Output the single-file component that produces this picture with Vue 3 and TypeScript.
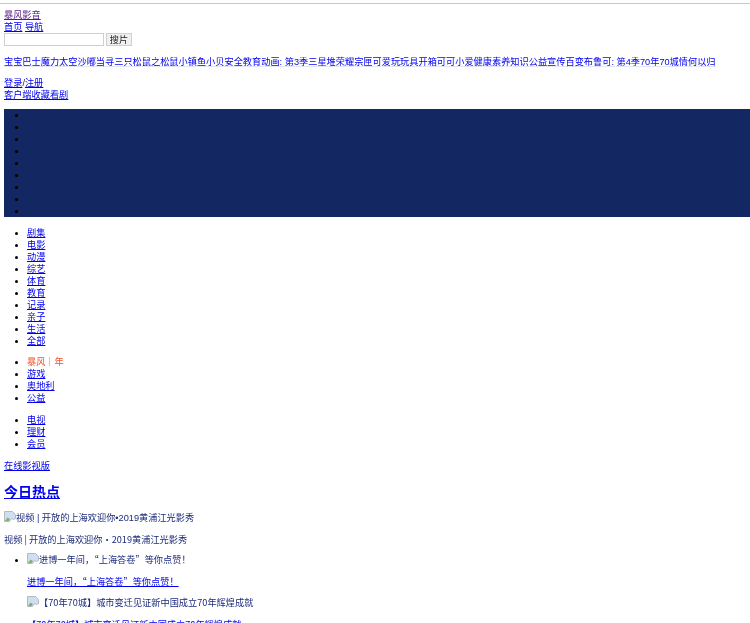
<script setup lang="ts">
const darkBullets = Array.from({ length: 9 }, (_, i) => i)
const channels = ['剧集', '电影', '动漫', '综艺', '体育', '教育', '记录', '亲子', '生活', '全部']
const others = ['暴风｜年', '游戏', '奥地利', '公益']
const services = ['电视', '理财', '会员']
const marquee = '宝宝巴士魔力太空沙嘟当寻三只松鼠之松鼠小镇鱼小贝安全教育动画: 第3季三星堆荣耀宗匣可爱玩玩具开箱可可小爱健康素养知识公益宣传百变布鲁可: 第4季70年70城情何以归'
</script>

<template>
  <div class="page">
    <div class="rule"></div>
    <div class="content">
      <div class="line"><a class="visited">暴风影音</a></div>
      <div class="line"><a>首页</a> <a>导航</a></div>
      <div class="search">
        <input class="field" type="text" />
        <button class="btn" type="button">搜片</button>
      </div>
      <div class="marquee"><a class="faint">{{ marquee }}</a></div>
      <div class="line login"><a>登录</a>/<a>注册</a></div>
      <div class="line"><a>客户端收藏看剧</a></div>
      <ul class="dark">
        <li v-for="i in darkBullets" :key="i"></li>
      </ul>
      <ul class="list">
        <li v-for="c in channels" :key="c"><a>{{ c }}</a></li>
      </ul>
      <ul class="list second">
        <li v-for="(c, i) in others" :key="c"><a :class="{ orange: i === 0 }">{{ c }}</a></li>
      </ul>
      <ul class="list">
        <li v-for="c in services" :key="c"><a>{{ c }}</a></li>
      </ul>
      <div class="line copyright"><a>在线影视版</a></div>
      <h2 class="heading"><a>今日热点</a></h2>
      <div class="thumb first">
        <svg class="broken" viewBox="0 0 12 11"><path d="M.5 10.5V.5h8l3 3v4l-2 1-2-1-2 3z" fill="#cfdff3" stroke="#b8b8b8"/><path d="M1 10l2.5-3.5L6 8l-1.5 2z" fill="#7fae70"/></svg><span>视频 | 开放的上海欢迎你•2019黄浦江光影秀</span>
      </div>
      <div class="caption"><span>视频 | 开放的上海欢迎你•2019黄浦江光影秀</span></div>
      <ul class="news">
        <li>
          <div class="thumb lead">
            <svg class="broken" viewBox="0 0 12 11"><path d="M.5 10.5V.5h8l3 3v4l-2 1-2-1-2 3z" fill="#cfdff3" stroke="#b8b8b8"/><path d="M1 10l2.5-3.5L6 8l-1.5 2z" fill="#7fae70"/></svg><span>进博一年间，“上海答卷”等你点赞！</span>
          </div>
          <div class="caption"><a>进博一年间，“上海答卷”等你点赞！</a></div>
          <div class="thumb">
            <svg class="broken" viewBox="0 0 12 11"><path d="M.5 10.5V.5h8l3 3v4l-2 1-2-1-2 3z" fill="#cfdff3" stroke="#b8b8b8"/><path d="M1 10l2.5-3.5L6 8l-1.5 2z" fill="#7fae70"/></svg><span>【70年70城】城市变迁见证新中国成立70年辉煌成就</span>
          </div>
          <div class="caption"><a>【70年70城】城市变迁见证新中国成立70年辉煌成就</a></div>
        </li>
      </ul>
    </div>
  </div>
</template>

<style>
html, body { margin: 0; background: #fff; overflow: hidden; }
</style>

<style scoped>
.page {
  width: 750px;
  height: 623px;
  overflow: hidden;
  font: 9.2px/12px "Liberation Sans", "Noto Sans CJK SC", sans-serif;
  color: #222;
}
.rule { height: 1px; margin-top: 3px; background: #c8c8c8; }
.content { padding: 5px 0 0 4px; filter: blur(0.4px); }
a { color: #00e; text-decoration: underline; }
.visited { color: #551a8b; }
.orange { color: #f0502a; text-decoration: none; }
.faint { text-decoration-color: #e4e6f4; }
.line { height: 12px; }
.search { display: flex; align-items: center; gap: 2px; height: 13px; }
.field {
  width: 98px; height: 11px; padding: 0; margin: 0;
  border: 1px solid #cfcfcf; box-sizing: content-box; background: #fff;
}
.btn {
  width: 24px; height: 11px; padding: 0; margin: 0;
  border: 1px solid #d0d0d0; background: #f0f0f0; color: #222;
  font: 9.2px/10px "Liberation Sans", "Noto Sans CJK SC", sans-serif;
  box-sizing: content-box;
}
.marquee { margin: 10px 0 0; height: 12px; white-space: nowrap; }
.login { margin-top: 9px; }
.dark, .list, .news { margin: 0; padding-left: 23px; }
.dark { margin-top: 8px; background: #132763; color: #000; }
.dark li { height: 12px; }
.list { margin-top: 10px; color: #000; }
.list.second { margin-top: 9px; }
.list li { height: 12px; }
.copyright { margin-top: 10px; }
.heading { margin: 11px 0 0; font-size: 14px; line-height: 18px; font-weight: 700; }
.thumb {
  height: 12px; margin-top: 9px; color: #1c2a7a; white-space: nowrap;
  font-family: "Noto Sans CJK SC", "Liberation Sans", sans-serif;
}
.thumb.first { margin-top: 10px; font-family: inherit; }
.thumb.lead { margin-top: 0; }
.caption {
  height: 12px; margin-top: 10px; color: #1c2a7a; white-space: nowrap;
  font-family: "Noto Sans CJK SC", "Liberation Sans", sans-serif;
}
.broken { display: inline-block; width: 12px; height: 11px; vertical-align: -1px; }
.news { margin-top: 8px; color: #000; }
</style>
